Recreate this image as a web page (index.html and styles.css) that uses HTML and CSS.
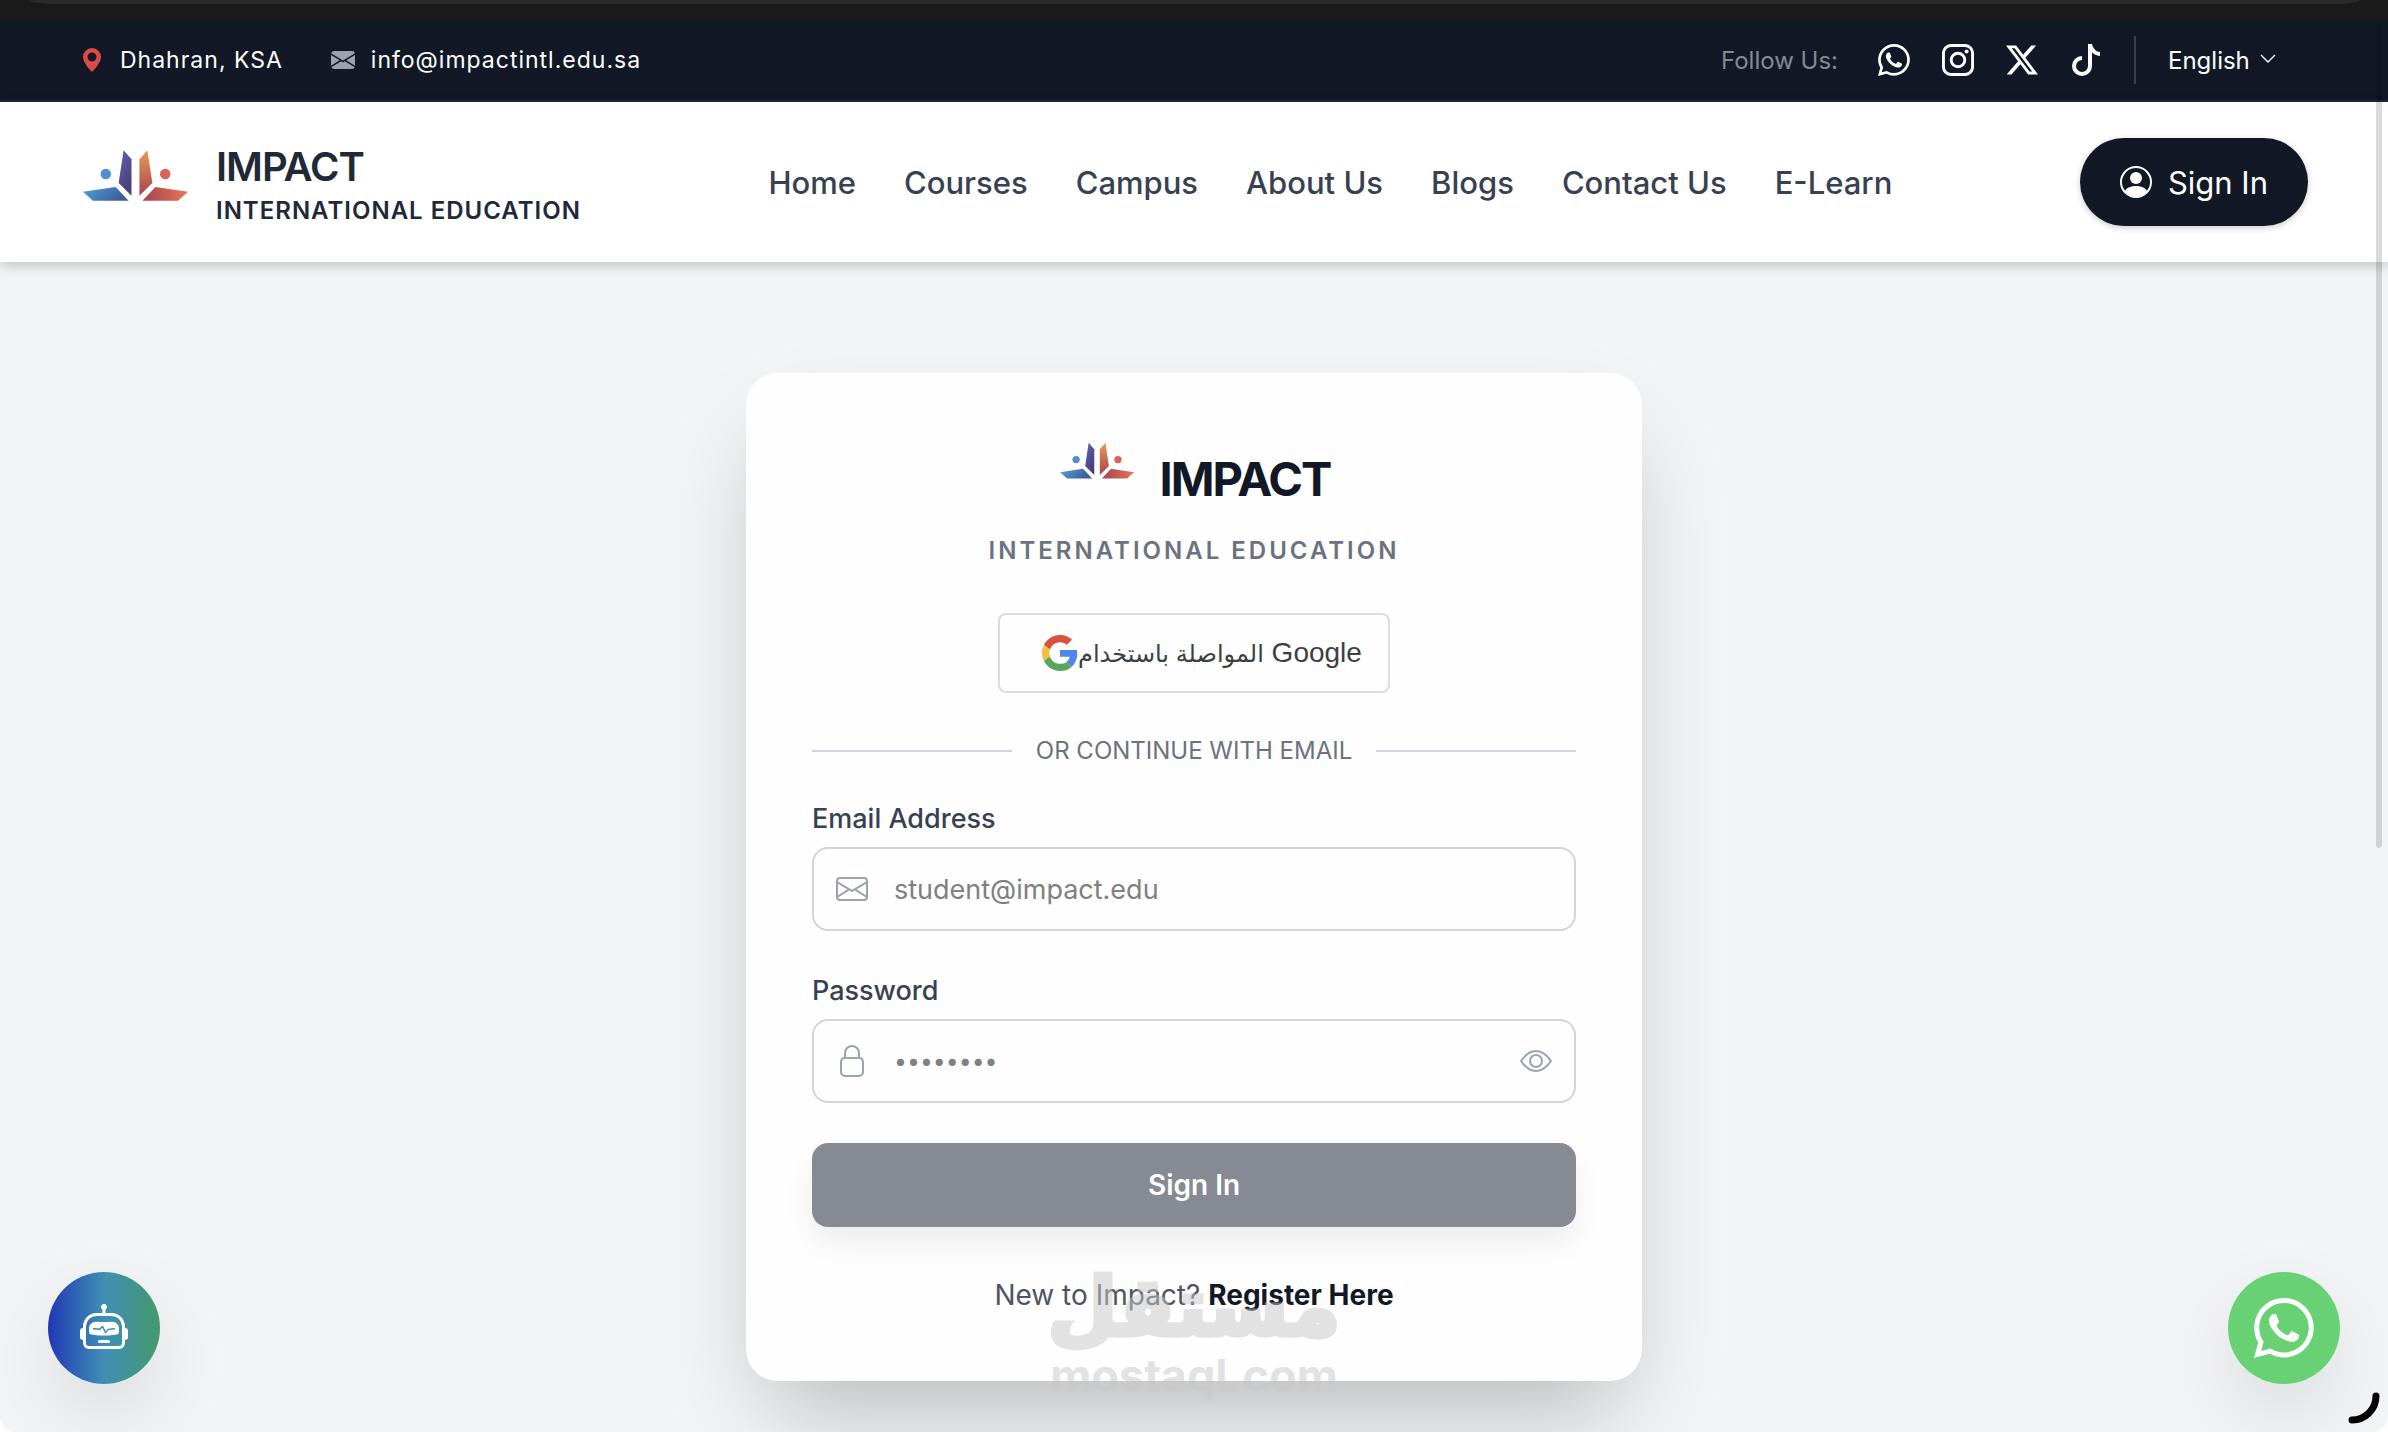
FILE: index.html
```html
<!DOCTYPE html>
<html lang="en">
<head>
    <meta charset="UTF-8">
    <meta name="viewport" content="width=device-width, initial-scale=1.0">
    <title>Sign In - Impact International Education</title>
    <link rel="stylesheet" href="styles.css">
</head>
<body>
    <!-- Shared shapes -->
    <svg class="sprite" aria-hidden="true">
        <defs>
            <linearGradient id="g-blue" x1="0" y1="0" x2="1" y2="0.3"><stop offset="0" stop-color="#4aa3dc"/><stop offset="1" stop-color="#3f5c98"/></linearGradient>
            <linearGradient id="g-purple" x1="0" y1="0" x2="0.5" y2="1"><stop offset="0" stop-color="#5f62ae"/><stop offset="1" stop-color="#4a3f7c"/></linearGradient>
            <linearGradient id="g-orange" x1="0" y1="0" x2="0" y2="1"><stop offset="0" stop-color="#e79a55"/><stop offset="1" stop-color="#a8444c"/></linearGradient>
            <linearGradient id="g-red" x1="0" y1="0" x2="1" y2="0"><stop offset="0" stop-color="#a5444d"/><stop offset="1" stop-color="#e5775a"/></linearGradient>
        </defs>
        <symbol id="logo" viewBox="-3 0 109 52">
            <path fill="url(#g-blue)" d="M0 42 33 37 46 51H10z"/>
            <path fill="url(#g-purple)" d="M41 0 49 9V46L36 33z"/>
            <path fill="url(#g-orange)" d="M65 0 57 9V46L70 33z"/>
            <path fill="url(#g-red)" d="M106 42 73 37 60 51H96z"/>
            <circle cx="23" cy="24" r="5.3" fill="#4f8fd0"/>
            <circle cx="83" cy="24" r="5.3" fill="#dc6259"/>
        </symbol>
        <symbol id="whatsapp" viewBox="0 0 16 16">
            <path d="M13.601 2.326A7.85 7.85 0 0 0 7.994 0C3.627 0 .068 3.558.064 7.926c0 1.399.366 2.76 1.057 3.965L0 16l4.204-1.102a7.9 7.9 0 0 0 3.79.965h.004c4.368 0 7.926-3.558 7.93-7.93A7.9 7.9 0 0 0 13.6 2.326zM7.994 14.521a6.6 6.6 0 0 1-3.356-.92l-.24-.144-2.494.654.666-2.433-.156-.251a6.56 6.56 0 0 1-1.007-3.505c0-3.626 2.957-6.584 6.591-6.584a6.56 6.56 0 0 1 4.66 1.931 6.56 6.56 0 0 1 1.928 4.66c-.004 3.639-2.961 6.592-6.592 6.592m3.615-4.934c-.197-.099-1.17-.578-1.353-.646-.182-.065-.315-.099-.445.099-.133.197-.513.646-.627.775-.114.133-.232.148-.43.05-.197-.1-.836-.308-1.592-.985-.59-.525-.985-1.175-1.103-1.372-.114-.198-.011-.304.088-.403.087-.088.197-.232.296-.346.1-.114.133-.198.198-.33.065-.134.034-.248-.015-.347-.05-.099-.445-1.076-.612-1.47-.16-.389-.323-.335-.445-.34-.114-.007-.247-.007-.38-.007a.73.73 0 0 0-.529.247c-.182.198-.691.677-.691 1.654s.71 1.916.81 2.049c.098.133 1.394 2.132 3.383 2.992.47.205.84.326 1.129.418.475.152.904.129 1.246.08.38-.058 1.171-.48 1.338-.943.164-.464.164-.86.114-.943-.049-.084-.182-.133-.38-.232"/>
        </symbol>
    </svg>

    <div class="browser-edge"><div class="browser-tab"></div></div>

    <div class="top-bar">
        <div class="contact">
            <span class="contact-item">
                <svg class="icon-small pin" viewBox="0 0 16 16"><path d="M8 16s6-5.686 6-10A6 6 0 0 0 2 6c0 4.314 6 10 6 10m0-7a3 3 0 1 1 0-6 3 3 0 0 1 0 6"/></svg>
                Dhahran, KSA
            </span>
            <a class="contact-item" href="mailto:info@impactintl.edu.sa">
                <svg class="icon-small mail" viewBox="0 0 16 16"><path d="M.05 3.555A2 2 0 0 1 2 2h12a2 2 0 0 1 1.95 1.555L8 8.414zM0 4.697v7.104l5.803-3.558zM6.761 8.83l-6.57 4.027A2 2 0 0 0 2 14h12a2 2 0 0 0 1.808-1.144l-6.57-4.027L8 9.586zm3.436-.586L16 11.801V4.697z"/></svg>
                info@impactintl.edu.sa
            </a>
        </div>
        <div class="top-right">
            <span class="follow">Follow Us:</span>
            <div class="social">
                <a href="#" aria-label="WhatsApp"><svg class="icon"><use href="#whatsapp"/></svg></a>
                <a href="#" aria-label="Instagram"><svg class="icon" viewBox="0 0 16 16"><g fill="none" stroke="#fff" stroke-width="1.45"><rect x=".72" y=".72" width="14.56" height="14.56" rx="3.8"/><circle cx="8" cy="8" r="3.4"/></g><circle cx="12.3" cy="3.7" r="1"/></svg></a>
                <a href="#" aria-label="X"><svg class="icon" viewBox="0 0 16 16"><path d="M12.6.75h2.454l-5.36 6.142L16 15.25h-4.937l-3.867-5.07-4.425 5.07H.316l5.733-6.57L0 .75h5.063l3.495 4.633L12.601.75Zm-.86 13.028h1.36L4.323 2.145H2.865z"/></svg></a>
                <a href="#" aria-label="TikTok"><svg class="icon" viewBox="0 0 16 16"><path d="M9 0h1.98c.144.715.54 1.617 1.235 2.512C12.895 3.389 13.797 4 15 4v2c-1.753 0-3.07-.814-4-1.829V11a5 5 0 1 1-5-5v2a3 3 0 1 0 3 3z"/></svg></a>
            </div>
            <div class="language">
                <select aria-label="Language">
                    <option>English</option>
                </select>
                <svg class="chevron" viewBox="0 0 16 16"><path d="M1 3l7 7 7-7"/></svg>
            </div>
        </div>
    </div>

    <header class="header">
        <a class="brand" href="#">
            <svg class="brand-logo"><use href="#logo"/></svg>
            <span class="brand-text">
                <span class="brand-name">IMPACT</span>
                <span class="brand-sub">INTERNATIONAL EDUCATION</span>
            </span>
        </a>
        <nav class="nav">
            <a href="#">Home</a>
            <a href="#">Courses</a>
            <a href="#">Campus</a>
            <a href="#">About Us</a>
            <a href="#">Blogs</a>
            <a href="#">Contact Us</a>
            <a href="#">E-Learn</a>
        </nav>
        <button class="sign-in-pill" type="button">
            <svg class="icon" viewBox="0 0 16 16"><path d="M11 6a3 3 0 1 1-6 0 3 3 0 0 1 6 0"/><path fill-rule="evenodd" d="M0 8a8 8 0 1 1 16 0A8 8 0 0 1 0 8m8-7a7 7 0 0 0-5.468 11.37C3.242 11.226 4.805 10 8 10s4.757 1.225 5.468 2.37A7 7 0 0 0 8 1"/></svg>
            Sign In
        </button>
    </header>

    <main class="main">
        <form class="card">
            <h1 class="card-title">
                <svg class="card-logo"><use href="#logo"/></svg>
                IMPACT
            </h1>
            <p class="card-sub">INTERNATIONAL EDUCATION</p>

            <button class="google" type="button">
                <svg class="google-logo" viewBox="0 0 48 48">
                    <path fill="#d9503f" d="M24 9.5c3.54 0 6.71 1.22 9.21 3.6l6.85-6.85C35.9 2.38 30.47 0 24 0 14.62 0 6.51 5.38 2.56 13.22l7.98 6.19C12.43 13.72 17.74 9.5 24 9.5z"/>
                    <path fill="#5383ec" d="M46.98 24.55c0-1.57-.15-3.09-.38-4.55H24v9.02h12.94c-.58 2.96-2.26 5.48-4.78 7.18l7.73 6c4.51-4.18 7.09-10.36 7.09-17.65z"/>
                    <path fill="#f1bf42" d="M10.53 28.59c-.48-1.45-.76-2.99-.76-4.59s.27-3.14.76-4.59l-7.98-6.19C.92 16.46 0 20.12 0 24c0 3.88.92 7.54 2.56 10.78l7.97-6.19z"/>
                    <path fill="#58a65c" d="M24 48c6.48 0 11.93-2.13 15.89-5.81l-7.73-6c-2.15 1.45-4.92 2.3-8.16 2.3-6.26 0-11.57-4.22-13.47-9.91l-7.98 6.19C6.51 42.62 14.62 48 24 48z"/>
                </svg>
                <span class="google-text" dir="ltr"><span class="google-ar" lang="ar">المواصلة باستخدام</span> Google</span>
            </button>

            <div class="divider"><span>OR CONTINUE WITH EMAIL</span></div>

            <label for="email">Email Address</label>
            <div class="field">
                <svg class="icon" viewBox="0 0 16 16"><path d="M0 4a2 2 0 0 1 2-2h12a2 2 0 0 1 2 2v8a2 2 0 0 1-2 2H2a2 2 0 0 1-2-2zm2-1a1 1 0 0 0-1 1v.217l7 4.2 7-4.2V4a1 1 0 0 0-1-1zm13 2.383-4.708 2.825L15 11.105zm-.034 6.876-5.64-3.471L8 9.583l-1.326-.795-5.64 3.47A1 1 0 0 0 2 13h12a1 1 0 0 0 .966-.741M1 11.105l4.708-2.897L1 5.383z"/></svg>
                <input id="email" type="email" placeholder="student@impact.edu">
            </div>

            <label for="password">Password</label>
            <div class="field">
                <svg class="icon" viewBox="0 0 16 16"><path d="M8 0a4 4 0 0 1 4 4v2.05a2.5 2.5 0 0 1 2 2.45v5a2.5 2.5 0 0 1-2.5 2.5h-7A2.5 2.5 0 0 1 2 13.5v-5a2.5 2.5 0 0 1 2-2.45V4a4 4 0 0 1 4-4M4.5 7A1.5 1.5 0 0 0 3 8.5v5A1.5 1.5 0 0 0 4.5 15h7a1.5 1.5 0 0 0 1.5-1.5v-5A1.5 1.5 0 0 0 11.5 7zM8 1a3 3 0 0 0-3 3v2h6V4a3 3 0 0 0-3-3"/></svg>
                <input id="password" class="password-input" type="password" placeholder="••••••••">
                <button class="eye" type="button" aria-label="Show password">
                    <svg class="icon" viewBox="0 0 16 16"><path d="M16 8s-3-5.5-8-5.5S0 8 0 8s3 5.5 8 5.5S16 8 16 8M1.173 8a13 13 0 0 1 1.66-2.043C4.12 4.668 5.88 3.5 8 3.5s3.879 1.168 5.168 2.457A13 13 0 0 1 14.828 8q-.086.13-.195.288c-.335.48-.83 1.12-1.465 1.755C11.879 11.332 10.119 12.5 8 12.5s-3.879-1.168-5.168-2.457A13 13 0 0 1 1.172 8z"/><path d="M8 5.5a2.5 2.5 0 1 0 0 5 2.5 2.5 0 0 0 0-5M4.5 8a3.5 3.5 0 1 1 7 0 3.5 3.5 0 0 1-7 0"/></svg>
                </button>
            </div>

            <button class="submit" type="submit">Sign In</button>

            <p class="register">New to Impact? <a href="#">Register Here</a></p>
        </form>
    </main>

    <div class="watermark">
        <span class="watermark-ar" lang="ar">مستقل</span>
        <span class="watermark-en">mostaql.com</span>
    </div>

    <button class="float-button chat-bot" type="button" aria-label="Chat assistant">
        <svg viewBox="0 0 16 16"><path d="M6 12.5a.5.5 0 0 1 .5-.5h3a.5.5 0 0 1 0 1h-3a.5.5 0 0 1-.5-.5M3 8.062C3 6.76 4.235 5.765 5.53 5.886a26.6 26.6 0 0 0 4.94 0C11.765 5.765 13 6.76 13 8.062v1.157a.93.93 0 0 1-.765.935c-.845.147-2.34.346-4.235.346s-3.39-.2-4.235-.346A.93.93 0 0 1 3 9.219zm4.542-.827a.25.25 0 0 0-.217.068l-.92.9a25 25 0 0 1-1.871-.183.25.25 0 0 0-.068.495c.55.076 1.232.149 2.02.193a.25.25 0 0 0 .189-.071l.754-.736.847 1.71a.25.25 0 0 0 .404.062l.932-.97a25 25 0 0 0 1.922-.188.25.25 0 0 0-.068-.495c-.538.074-1.207.145-1.98.189a.25.25 0 0 0-.166.076l-.754.785-.842-1.7a.25.25 0 0 0-.182-.135"/><path d="M8.5 1.866a1 1 0 1 0-1 0V3h-2A4.5 4.5 0 0 0 1 7.5V8a1 1 0 0 0-1 1v2a1 1 0 0 0 1 1v1a2 2 0 0 0 2 2h10a2 2 0 0 0 2-2v-1a1 1 0 0 0 1-1V9a1 1 0 0 0-1-1v-.5A4.5 4.5 0 0 0 10.5 3h-2zM14 7.5V13a1 1 0 0 1-1 1H3a1 1 0 0 1-1-1V7.5A3.5 3.5 0 0 1 5.5 4h5A3.5 3.5 0 0 1 14 7.5"/></svg>
    </button>
    <a class="float-button chat-whatsapp" href="#" aria-label="WhatsApp chat">
        <svg><use href="#whatsapp"/></svg>
    </a>
    <svg class="corner-arc" viewBox="0 0 32 32"><path d="M28 4A24 24 0 0 1 4 28"/></svg>
    <div class="scroll-thumb"></div>
</body>
</html>
```

FILE: styles.css
```css
* {
    box-sizing: border-box;
}

html {
    background: #fff;
}

body {
    margin: 0;
    height: 100vh;
    overflow: hidden;
    font-family: Inter, "Liberation Sans", Arial, sans-serif;
    background: #f2f4f6;
    border-radius: 0 0 16px 16px;
}

a {
    color: inherit;
    text-decoration: none;
}

button,
input,
select {
    font-family: inherit;
}

button {
    border: none;
    cursor: pointer;
}

.sprite {
    position: absolute;
    width: 0;
    height: 0;
}

.icon {
    display: block;
    width: 32px;
    height: 32px;
    fill: currentColor;
    flex-shrink: 0;
}

/* Browser edge */
.browser-edge {
    height: 20px;
    padding: 0 28px;
    background: #1a1a1a;
}

.browser-tab {
    height: 4px;
    background: #2a2a2a;
    border-radius: 0 0 28px 28px / 0 0 4px 4px;
}

/* Top bar */
.top-bar {
    display: flex;
    align-items: center;
    justify-content: space-between;
    height: 82px;
    padding: 0 80px;
    background: #121826;
    border-bottom: 2px solid #1f2937;
    color: #fff;
    font-size: 24px;
}

.contact {
    display: flex;
    gap: 48px;
    font-size: 23px;
    letter-spacing: 1px;
}

.contact-item {
    display: flex;
    align-items: center;
    gap: 16px;
}

.icon-small {
    width: 24px;
    height: 24px;
}

.pin {
    fill: #dd4a48;
}

.mail {
    fill: #9ca3af;
}

.top-right {
    display: flex;
    align-items: center;
}

.follow {
    margin-right: 40px;
    color: #848a96;
}

.social {
    display: flex;
    gap: 32px;
}

.language {
    display: flex;
    align-items: center;
    gap: 10px;
    height: 48px;
    margin-left: 32px;
    padding: 0 32px;
    border-left: 2px solid #374151;
}

.language select {
    appearance: none;
    padding: 0;
    border: none;
    background: none;
    color: #fff;
    font-size: 24px;
}

.chevron {
    width: 16px;
    height: 16px;
    fill: none;
    stroke: #fff;
    stroke-width: 1.4;
}

/* Header */
.header {
    position: relative;
    display: flex;
    align-items: center;
    justify-content: space-between;
    height: 160px;
    padding: 0 80px;
    background: #fff;
    box-shadow: 0 4px 12px rgba(0, 0, 0, 0.2);
}

.brand {
    display: flex;
    align-items: center;
    gap: 28px;
    color: #1f2937;
}

.brand-logo {
    width: 108px;
    height: 52px;
    margin-bottom: 12px;
}

.brand-text {
    display: flex;
    flex-direction: column;
    padding-top: 10px;
}

.brand-name {
    font-size: 40px;
    line-height: 48px;
    font-weight: 600;
    letter-spacing: -1px;
}

.brand-sub {
    font-size: 24px;
    line-height: 40px;
    font-weight: 600;
    letter-spacing: 1px;
}

.nav {
    display: flex;
    gap: 48px;
    color: #374151;
    font-size: 31px;
    font-weight: 500;
}

.sign-in-pill {
    display: flex;
    align-items: center;
    gap: 16px;
    height: 88px;
    padding: 0 40px;
    border-radius: 44px;
    background: #121826;
    box-shadow: 0 2px 6px rgba(0, 0, 0, 0.2);
    color: #fff;
    font-size: 31px;
}

/* Login card */
.main {
    display: flex;
    justify-content: center;
    padding: 111px 32px;
}

.card {
    width: 896px;
    padding: 64px 66px 66px;
    border-radius: 32px;
    background: #fefefe;
    box-shadow: 0 50px 100px -24px rgba(0, 0, 0, 0.25);
    text-align: center;
}

.card-title {
    display: flex;
    justify-content: center;
    align-items: center;
    gap: 26px;
    margin: 0;
    color: #121826;
    font-size: 47px;
    line-height: 84px;
    letter-spacing: -2px;
}

.card-logo {
    width: 76px;
    height: 38px;
    margin-bottom: 36px;
}

.card-sub {
    margin: 14px 0 46px;
    color: #6b7280;
    font-size: 24px;
    line-height: 32px;
    font-weight: 600;
    letter-spacing: 3px;
}

.google {
    display: flex;
    align-items: center;
    justify-content: center;
    width: 392px;
    height: 80px;
    margin: 0 auto;
    padding: 0 24px 0 40px;
    border: 2px solid #dadce0;
    border-radius: 8px;
    background: #fefefe;
    color: #3c4043;
    font-family: "Liberation Sans", "DejaVu Sans", sans-serif;
    font-size: 28px;
}

.google-logo {
    width: 36px;
    height: 36px;
    flex-shrink: 0;
}

.google-text {
    white-space: nowrap;
}

.google-ar {
    font-size: 24px;
}

.divider {
    display: flex;
    align-items: center;
    gap: 24px;
    margin: 42px 0 32px;
    color: #6b7280;
    font-size: 24px;
    line-height: 32px;
}

.divider::before,
.divider::after {
    content: "";
    flex: 1;
    height: 2px;
    background: #d1d5db;
}

.card label {
    display: block;
    margin-bottom: 8px;
    color: #374151;
    font-size: 27px;
    line-height: 40px;
    font-weight: 500;
    text-align: left;
}

.field {
    display: flex;
    align-items: center;
    gap: 26px;
    height: 84px;
    margin-bottom: 40px;
    padding: 0 22px;
    border: 2px solid #d1d5db;
    border-radius: 16px;
    color: #9ca3af;
}

.field input {
    flex: 1;
    min-width: 0;
    padding: 0;
    border: none;
    outline: none;
    background: none;
    font-size: 27px;
}

.field input::placeholder {
    color: #808080;
}

.field .password-input {
    font-size: 23px;
}

.eye {
    padding: 0;
    background: none;
    color: #9ca3af;
}

.submit {
    display: block;
    width: 100%;
    height: 84px;
    border-radius: 16px;
    background: #868a93;
    box-shadow: 0 16px 30px rgba(0, 0, 0, 0.07);
    color: #fff;
    font-size: 28px;
    font-weight: 600;
}

.register {
    margin: 48px 0 0;
    color: #4b5563;
    font-size: 28px;
    line-height: 40px;
}

.register a {
    color: #121826;
    font-weight: 700;
}

/* Things that float over the page */
.watermark {
    position: absolute;
    left: 0;
    right: 0;
    bottom: 32px;
    display: flex;
    flex-direction: column;
    align-items: center;
    color: #c8c8c8;
    font-weight: 700;
    opacity: 0.5;
    pointer-events: none;
}

.watermark-ar {
    font-family: "DejaVu Sans", sans-serif;
    font-size: 80px;
    line-height: 88px;
    -webkit-text-stroke: 5px #c8c8c8;
}

.watermark-en {
    font-size: 45px;
    line-height: 48px;
}

.float-button {
    position: absolute;
    bottom: 48px;
    display: flex;
    align-items: center;
    justify-content: center;
    width: 112px;
    height: 112px;
    padding: 0;
    border-radius: 50%;
    box-shadow: 0 32px 80px rgba(0, 0, 0, 0.1);
}

.float-button svg {
    width: 48px;
    height: 48px;
    fill: #fff;
}

.chat-bot {
    left: 48px;
    background: linear-gradient(to right, #2038b4, #3f8fb5 50%, #45996a);
}

.chat-whatsapp {
    right: 48px;
    background: #67d173;
}

.chat-whatsapp svg {
    width: 60px;
    height: 60px;
}

.corner-arc {
    position: absolute;
    right: 8px;
    bottom: 8px;
    width: 32px;
    height: 32px;
    fill: none;
    stroke: #000;
    stroke-width: 7;
    stroke-linecap: round;
}

.scroll-thumb {
    position: absolute;
    top: 24px;
    right: 6px;
    width: 6px;
    height: 824px;
    border-radius: 3px;
    background: rgba(0, 0, 0, 0.14);
}
```
